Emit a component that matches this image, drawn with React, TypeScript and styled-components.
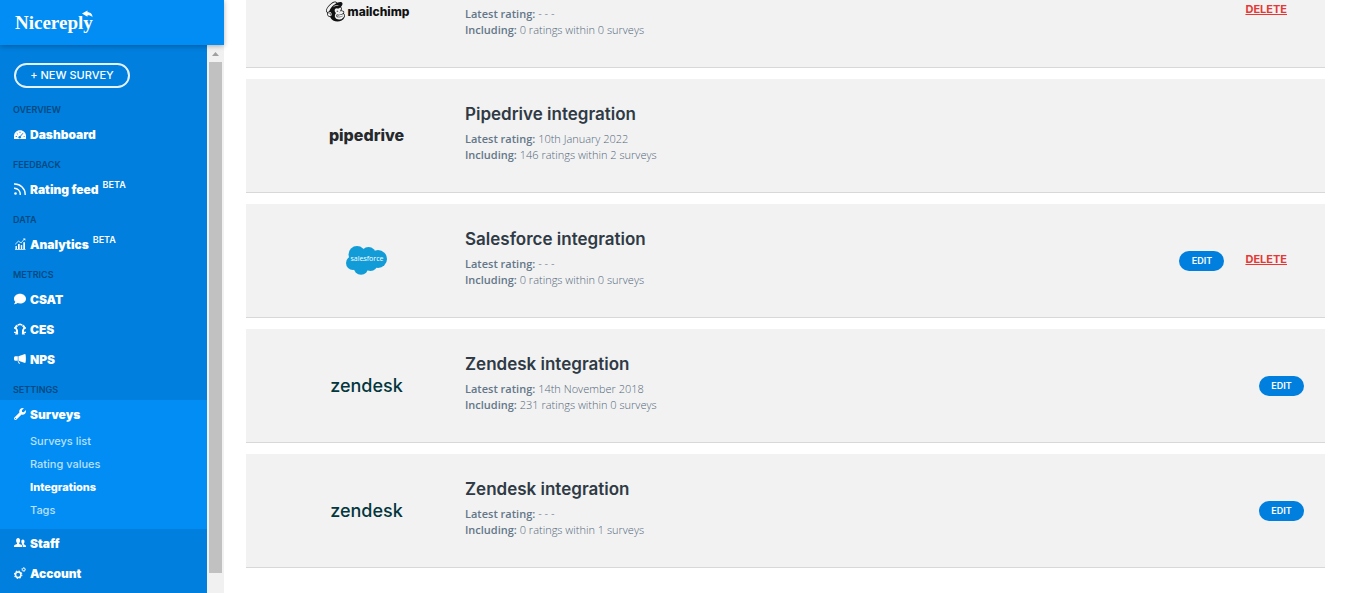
import React from 'react';
import styled, { createGlobalStyle, css } from 'styled-components';
import { FaComment, FaMailchimp, FaWrench } from 'react-icons/fa';

const GlobalStyle = createGlobalStyle`
  *, *::before, *::after { box-sizing: border-box; }
  body {
    margin: 0;
    background: #fff;
    font-family: 'Open Sans', 'Liberation Sans', sans-serif;
  }
`;

const display = css`
  font-family: Inter, 'Liberation Sans', sans-serif;
`;

const Page = styled.div`
  display: flex;
  height: 100vh;
  overflow: hidden;
`;

const Sidebar = styled.aside`
  ${display}
  display: flex;
  flex-direction: column;
  flex: none;
  width: 224px;
  color: #fff;
`;

const Brand = styled.header`
  position: relative;
  flex: none;
  height: 45px;
  padding: 10px 15px;
  background: #028df5;
  box-shadow: 0 1px 5px rgba(0, 0, 0, 0.3);
`;

const BrandLink = styled.a`
  position: relative;
  display: inline-block;
  color: #fff;
  font: bold 19px/26px 'Liberation Serif', serif;
  text-decoration: none;
`;

const BrandArrow = styled.svg`
  position: absolute;
  top: 0;
  right: 0;
  width: 12px;
  height: 8px;
`;

const SidebarBody = styled.div`
  display: flex;
  flex: 1;
  min-height: 0;
`;

const Nav = styled.nav`
  flex: 1;
  overflow: hidden;
  padding-top: 18px;
  background: #007fde;
`;

const NewSurvey = styled.button`
  ${display}
  display: block;
  width: 116px;
  height: 25px;
  margin: 0 0 7px 14px;
  padding: 0 0 2px;
  border: 2px solid #e6f3fd;
  border-radius: 13px;
  background: transparent;
  color: #fff;
  font-size: 11px;
  font-weight: 500;
`;

const SectionLabel = styled.h2`
  height: 25px;
  margin: 0;
  padding: 4px 0 0 13px;
  color: #044a80;
  font-size: 9px;
  font-weight: 600;
  line-height: 21px;
`;

const NavLink = styled.a`
  display: flex;
  align-items: center;
  gap: 4px;
  height: 30px;
  padding: 0 0 2px 14px;
  color: #fff;
  font-size: 12px;
  font-weight: 900;
  text-decoration: none;

  svg {
    flex: none;
    width: 12px;
    height: 12px;
  }
`;

const Beta = styled.sup`
  align-self: flex-start;
  padding-top: 4px;
  font-size: 9px;
  font-weight: 600;
  line-height: 12px;
`;

const ActiveGroup = styled.div`
  padding-bottom: 7px;
  background: #028df5;
`;

const SubLink = styled.a<{ $active?: boolean }>`
  display: block;
  padding-left: 30px;
  color: ${(p) => (p.$active ? '#fff' : '#b9e0fd')};
  font-size: 11px;
  font-weight: ${(p) => (p.$active ? 800 : 500)};
  line-height: 23px;
  text-decoration: none;
`;

const ScrollTrack = styled.div`
  display: flex;
  flex-direction: column;
  flex: none;
  width: 17px;
  padding: 0 2px 20px;
  background: #f1f1f1;
`;

const ScrollArrow = styled.svg`
  flex: none;
  width: 13px;
  height: 17px;
`;

const ScrollThumb = styled.div`
  flex: 1;
  background: #c1c1c1;
`;

const Main = styled.main`
  display: flex;
  flex: 1;
  flex-direction: column;
  justify-content: flex-end;
  gap: 11px;
  min-width: 0;
  padding: 0 20px 25px 22px;
`;

const Card = styled.article`
  display: flex;
  flex: none;
  align-items: center;
  padding: 0 21px 0 22px;
  border-bottom: 1px solid #d8d8d8;
  background: #f2f2f2;
`;

const LogoCell = styled.div`
  display: flex;
  flex: none;
  align-items: center;
  justify-content: center;
  width: 197px;
`;

const Info = styled.div`
  display: flex;
  flex: 1;
  flex-direction: column;
  justify-content: flex-end;
  min-height: 113px;
  padding: 23px 0 29px;
`;

const Title = styled.h3`
  ${display}
  margin: 0 0 5px;
  color: #2f3a45;
  font-size: 17px;
  font-weight: 600;
  line-height: 24px;
`;

const Detail = styled.p`
  margin: 0;
  color: #52687c;
  font-size: 11px;
  font-weight: 300;
  line-height: 16px;

  strong {
    color: #647789;
    font-weight: 600;
  }
`;

const Actions = styled.div`
  display: flex;
  align-items: center;
  gap: 4px;
`;

const EditButton = styled.button`
  ${display}
  width: 45px;
  height: 20px;
  padding: 0 0 1px;
  border: 0;
  border-radius: 10px;
  background: #007fde;
  color: #fff;
  font-size: 9px;
  font-weight: 600;
`;

const DeleteLink = styled.a`
  ${display}
  margin: 0 17px;
  padding-bottom: 3px;
  color: #e53935;
  font-size: 11px;
  font-weight: 700;
  line-height: 16px;
`;

const wordmarks = {
  mailchimp: css`
    padding-top: 2px;
    color: #111;
    font-size: 12px;
    font-weight: 800;
  `,
  pipedrive: css`
    padding-bottom: 2px;
    color: #26292c;
    font-size: 16px;
    font-weight: 800;
  `,
  zendesk: css`
    color: #03363d;
    font-size: 18px;
    font-weight: 500;
  `,
};

const Wordmark = styled.span<{ $brand: keyof typeof wordmarks }>`
  ${display}
  display: flex;
  align-items: center;
  gap: 1px;
  line-height: 24px;
  ${(p) => wordmarks[p.$brand]}
`;

const GaugeIcon = () => (
  <svg viewBox="0 0 12 12" fill="none" stroke="currentColor" aria-hidden="true">
    <path d="M0 11V8.300C0 4.700 2.500 2.300 6 2.300s6 2.400 6 6V11z" fill="currentColor" stroke="none" />
    <path d="M5.500 9.300 9 5.200M1.700 8.500h1.200M2.800 5.400l.9.800M6 3.700v1.200M9.700 8.500h.9" stroke="#007fde" strokeWidth="0.900" />
    <circle cx="5.700" cy="9.200" r="1.200" fill="#007fde" stroke="none" />
  </svg>
);

const RssIcon = () => (
  <svg viewBox="0 0 12 12" fill="none" stroke="currentColor" strokeWidth="1.4" aria-hidden="true">
    <circle cx="1.5" cy="10.5" r="1.3" fill="currentColor" stroke="none" />
    <path d="M0 5.2a6 6 0 0 1 6.2 6.8M0 1a10.5 10.5 0 0 1 11.2 11" />
  </svg>
);

const ChartIcon = () => (
  <svg viewBox="0 0 12 12" fill="currentColor" aria-hidden="true">
    <path d="M1.5 8h1.4v3H1.500zM4 6h1.700v5H4zM6.800 7h1.400v4H6.800zM9.300 4.200H11V11H9.300zM1 11h10.500v.8H1z" />
    <path d="M1.200 6.300 4.400 3.200l2.800 1.700L10.300 1" fill="none" stroke="currentColor" strokeWidth="0.8" />
    <path d="M9 .4h2.300v2.300z" />
  </svg>
);

const EffortIcon = () => (
  <svg viewBox="0 0 12 12" fill="none" stroke="currentColor" aria-hidden="true">
    <path d="M3.800 1.900 6 1.300l2.200.6" strokeWidth="1.600" />
    <path d="M3.500 2.500C1.600 3.200 1.300 4.800 2.300 6c1.100 1.300 1.100 2.700.2 4.500h1.600M8.500 2.500c1.900.7 2.200 2.300 1.200 3.500-1.100 1.300-1.100 2.700-.2 4.500H7.900" strokeWidth="1.900" />
    <path d="M0 5h2M0 9.300h2.500M12 5h-2M12 9.300H9.500" strokeWidth="1.300" />
  </svg>
);

const MegaphoneIcon = () => (
  <svg viewBox="0 0 12 12" fill="currentColor" aria-hidden="true">
    <path d="M0 5.200C0 3.800.6 3.200 1.500 3.200h2.300v4.600H1.500C.6 7.800 0 7.200 0 5.800zM4.400 3.200 11 1c.6 0 .9 2 .9 4.500S11.600 10 11 10L4.400 7.800zM3.500 8.300h1l1.700 2.500H5z" />
  </svg>
);

const StaffIcon = () => (
  <svg viewBox="0 0 12 12" fill="currentColor" aria-hidden="true">
    <path d="M2.100 3.500C2.100 1.900 2.900 1 4.100 1s2 .9 2 2.500c0 1.100-.4 2-.9 2.600v.8l2.100.9c.7.300.9.900.9 2.200H0c0-1.300.3-1.900 1-2.200L3 6.900v-.8c-.5-.6-.9-1.500-.9-2.600z" />
    <path d="M7.300 4.500c0-1.300.6-2.100 1.600-2.100s1.600.8 1.600 2.100c0 .9-.3 1.500-.7 2v.8l1.400.6c.6.200.8.800.8 2.100H8.900c0-1.700-.3-2.400-1.200-2.800l.3-.7c-.4-.5-.7-1.100-.7-2z" />
  </svg>
);

const GearsIcon = () => (
  <svg viewBox="0 0 12 12" fill="none" stroke="currentColor" aria-hidden="true">
    <circle cx="4.200" cy="7.700" r="2.700" strokeWidth="1.500" />
    <circle cx="4.200" cy="7.700" r="3.700" strokeWidth="1.100" strokeDasharray="1.450" />
    <circle cx="9.700" cy="2.500" r="1.300" strokeWidth="1" />
    <circle cx="9.700" cy="2.500" r="2" strokeWidth="0.700" strokeDasharray="0.780" />
  </svg>
);

const SalesforceLogo = () => (
  <svg width="41" height="29" viewBox="0 0 41 29" role="img" aria-label="Salesforce">
    <g fill="#119cd8">
      <circle cx="11" cy="8.500" r="8.500" />
      <circle cx="22.500" cy="8.500" r="7.500" />
      <circle cx="32" cy="13" r="9" />
      <circle cx="7" cy="17" r="7" />
      <circle cx="15" cy="21.500" r="7.300" />
      <circle cx="24.500" cy="18" r="7" />
    </g>
    <text x="21" y="15" fill="#fff" fontFamily="Open Sans, sans-serif" fontSize="7" fontWeight="400" textAnchor="middle">
      salesforce
    </text>
  </svg>
);

type BrandName = 'salesforce' | keyof typeof wordmarks;

const BrandLogo = ({ brand }: { brand: BrandName }) => {
  if (brand === 'salesforce') return <SalesforceLogo />;
  return (
    <Wordmark $brand={brand}>
      {brand === 'mailchimp' && <FaMailchimp size={23} aria-hidden="true" />}
      {brand}
    </Wordmark>
  );
};

interface Integration {
  brand: BrandName;
  title?: string;
  latest: string;
  including: string;
  editable?: boolean;
  removable?: boolean;
}

const integrations: Integration[] = [
  { brand: 'mailchimp', latest: '- - -', including: '0 ratings within 0 surveys', removable: true },
  { brand: 'pipedrive', title: 'Pipedrive integration', latest: '10th January 2022', including: '146 ratings within 2 surveys' },
  { brand: 'salesforce', title: 'Salesforce integration', latest: '- - -', including: '0 ratings within 0 surveys', editable: true, removable: true },
  { brand: 'zendesk', title: 'Zendesk integration', latest: '14th November 2018', including: '231 ratings within 0 surveys', editable: true },
  { brand: 'zendesk', title: 'Zendesk integration', latest: '- - -', including: '0 ratings within 1 surveys', editable: true },
];

const App = () => (
  <>
    <GlobalStyle />
    <Page>
      <Sidebar>
        <Brand>
          <BrandLink href="#home">
            Nicereply
            <BrandArrow viewBox="0 0 12 8" fill="#fff" aria-hidden="true">
              <path d="M1 3.500 6.500.5v1.700c3.500.1 5 2 5 5-1.200-1.500-2.600-2-5-2v1.600z" />
            </BrandArrow>
          </BrandLink>
        </Brand>
        <SidebarBody>
          <Nav>
            <NewSurvey type="button">+ NEW SURVEY</NewSurvey>
            <SectionLabel>OVERVIEW</SectionLabel>
            <NavLink href="#dashboard"><GaugeIcon />Dashboard</NavLink>
            <SectionLabel>FEEDBACK</SectionLabel>
            <NavLink href="#feed"><RssIcon />Rating feed<Beta>BETA</Beta></NavLink>
            <SectionLabel>DATA</SectionLabel>
            <NavLink href="#analytics"><ChartIcon />Analytics<Beta>BETA</Beta></NavLink>
            <SectionLabel>METRICS</SectionLabel>
            <NavLink href="#csat"><FaComment />CSAT</NavLink>
            <NavLink href="#ces"><EffortIcon />CES</NavLink>
            <NavLink href="#nps"><MegaphoneIcon />NPS</NavLink>
            <SectionLabel>SETTINGS</SectionLabel>
            <ActiveGroup>
              <NavLink href="#surveys"><FaWrench />Surveys</NavLink>
              <SubLink href="#list">Surveys list</SubLink>
              <SubLink href="#values">Rating values</SubLink>
              <SubLink href="#integrations" $active>Integrations</SubLink>
              <SubLink href="#tags">Tags</SubLink>
            </ActiveGroup>
            <NavLink href="#staff"><StaffIcon />Staff</NavLink>
            <NavLink href="#account"><GearsIcon />Account</NavLink>
          </Nav>
          <ScrollTrack>
            <ScrollArrow viewBox="0 0 13 17" fill="#a0a0a0" aria-hidden="true">
              <path d="M3 11h7L6.500 7z" />
            </ScrollArrow>
            <ScrollThumb />
          </ScrollTrack>
        </SidebarBody>
      </Sidebar>
      <Main>
        {integrations.map((item, index) => (
          <Card key={index}>
            <LogoCell><BrandLogo brand={item.brand} /></LogoCell>
            <Info>
              {item.title && <Title>{item.title}</Title>}
              <Detail><strong>Latest rating:</strong> {item.latest}</Detail>
              <Detail><strong>Including:</strong> {item.including}</Detail>
            </Info>
            <Actions>
              {item.editable && <EditButton type="button">EDIT</EditButton>}
              {item.removable && <DeleteLink href="#delete">DELETE</DeleteLink>}
            </Actions>
          </Card>
        ))}
      </Main>
    </Page>
  </>
);

export default App;
